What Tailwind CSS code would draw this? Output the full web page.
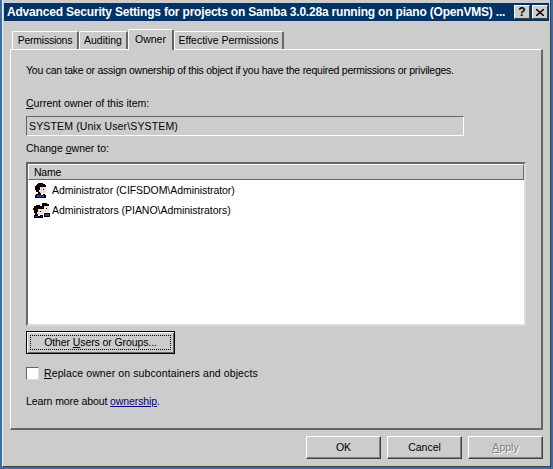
<!DOCTYPE html>
<html lang="en">
<head>
    <meta charset="UTF-8">
    <title>Advanced Security Settings</title>
    <script src="https://cdn.jsdelivr.net/npm/@tailwindcss/browser@4"></script>
</head>
<body class="bg-[#3a6ea5]">
    <!-- window -->
    <div class="ml-[2px] w-[549px] h-[467px] overflow-hidden bg-[#cccccc] border-l border-l-[#eeeeee] border-r border-r-[#404040] border-b border-b-[#404040] font-['Liberation_Sans',sans-serif] text-[10.5px] tracking-[-0.25px] leading-[13px] text-black flex flex-col">
        <!-- title bar -->
        <div class="h-[18px] mt-[3px] ml-[1px] mr-[1px] bg-[#003366] flex items-center pl-[3px] pr-[1px] shrink-0">
            <span class="flex-1 min-w-0 text-white font-bold text-[12px] tracking-[-0.19px] whitespace-nowrap">Advanced Security Settings for projects on Samba 3.0.28a running on piano (OpenVMS) ...</span>
            <div class="w-[16px] h-[14px] bg-[#cccccc] border border-t-white border-l-white border-r-[#404040] border-b-[#404040] flex items-center justify-center font-bold text-[12px] tracking-normal">?</div>
            <div class="w-[16px] h-[14px] bg-[#cccccc] border border-t-white border-l-white border-r-[#404040] border-b-[#404040] ml-[2px] flex items-center justify-center">
                <svg width="8" height="7" viewBox="0 0 8 7"><path d="M0 0L8 7M8 0L0 7" stroke="#000" stroke-width="1.4"/></svg>
            </div>
        </div>

        <!-- tabs -->
        <div class="flex items-end h-[28px] pl-[9px] shrink-0">
            <div class="w-[67px] h-[18px] bg-[#cccccc] border-t border-l border-white border-r-2 border-r-[#666666] rounded-t-[2px] flex items-center justify-center">Permissions</div>
            <div class="w-[49px] h-[18px] bg-[#cccccc] border-t border-l border-white border-r-2 border-r-[#666666] rounded-t-[2px] flex items-center justify-center tracking-[0px]">Auditing</div>
            <div class="w-[46px] h-[21px] -mb-[1px] z-10 bg-[#cccccc] border-t border-l border-white border-r-2 border-r-[#666666] rounded-t-[2px] flex items-center justify-center pb-[2px] tracking-[0px]">Owner</div>
            <div class="w-[110px] h-[18px] bg-[#cccccc] border-t border-l border-white border-r-2 border-r-[#666666] rounded-t-[2px] flex items-center justify-center tracking-[0px]">Effective Permissions</div>
        </div>

        <!-- panel -->
        <div class="ml-[7px] w-[533px] h-[381px] border-t border-l border-white border-r-2 border-b-2 border-r-[#666666] border-b-[#666666] pl-[15px] shrink-0 flex flex-col">
            <p class="mt-[14px]">You can take or assign ownership of this object if you have the required permissions or privileges.</p>
            <p class="mt-[20px] tracking-[0px]"><u>C</u>urrent owner of this item:</p>
            <div class="mt-[6px] h-[20px] w-[438px] border border-t-[#666666] border-l-[#666666] border-r-white border-b-white flex items-center pl-[2px] tracking-[0.15px]">SYSTEM (Unix User\SYSTEM)</div>
            <p class="mt-[6px] tracking-[0px]">Change <u>o</u>wner to:</p>
            <!-- list -->
            <div class="mt-[7px] h-[164px] w-[500px] bg-white border-2 border-t-[#666666] border-l-[#666666] border-r-[#dddddd] border-b-[#dddddd] flex flex-col">
                <div class="h-[16px] bg-[#cccccc] border-t border-l border-white border-r border-b border-r-[#666666] border-b-[#666666] pl-[5px] flex items-center shrink-0">Name</div>
                <div class="h-[20px] flex items-center pl-[6px]">
                    <svg class="w-[14px] h-[15px] mr-[4px] shrink-0" viewBox="0 0 14 15" shape-rendering="crispEdges">
                        <path d="M4 0H9V1H11V2H12V4H6V7H5V9H6V10H7V11H4V9H2V7H1V3H2V2H3V1H4Z" fill="#000"/>
                        <path d="M6 4H12V7H13V8H12V10H8V11H7V10H6V9H5V7H6Z" fill="#f6dcd2"/>
                        <path d="M9 6H10V7H9Z" fill="#000"/>
                        <path d="M2 11H7V12H9V11H11V12H12V15H1V12H2Z" fill="#000"/>
                        <path d="M3 12H7V13H9V12H10V14H3Z" fill="#1c3fb0"/>
                    </svg>
                    <span class="tracking-[-0.06px]">Administrator (CIFSDOM\Administrator)</span>
                </div>
                <div class="h-[20px] flex items-center pl-[5px]">
                    <svg class="w-[18px] h-[15px] mr-[1px] shrink-0" viewBox="0 0 18 15" shape-rendering="crispEdges">
                        <!-- back head -->
                        <path d="M9 0H14V1H16V3H11V6H10V8H8V3H9Z" fill="#000"/>
                        <path d="M11 3H16V6H17V7H16V9H12V8H11V7H10V6H11Z" fill="#f6dcd2"/>
                        <path d="M13 5H14V6H13Z" fill="#000"/>
                        <!-- front head -->
                        <path d="M3 2H7V3H9V4H10V6H5V9H4V11H5V12H2V10H1V7H0V5H1V3H3Z" fill="#000"/>
                        <path d="M5 6H10V8H11V9H10V11H7V12H5V11H4V9H5Z" fill="#f6dcd2"/>
                        <path d="M7 8H8V9H7Z" fill="#000"/>
                        <!-- shoulders -->
                        <path d="M11 10H17V14H11ZM1 12H5V13H7V12H10V15H1Z" fill="#000"/>
                        <path d="M12 11H16V13H12ZM2 13H5V14H9V13H8V14H2Z" fill="#1c3fb0"/>
                    </svg>
                    <span class="tracking-[-0.03px]">Administrators (PIANO\Administrators)</span>
                </div>
            </div>
            <!-- other users button -->
            <button class="mt-[5px] w-[149px] h-[23px] bg-[#cccccc] border border-black shadow-[inset_1px_1px_0_#ffffff,inset_-1px_-1px_0_#666666] flex items-center justify-center">
                <span class="w-[141px] h-[15px] border border-dotted border-black flex items-center justify-center"><span class="tracking-[-0.1px]">Other <u>U</u>sers or Groups...</span></span>
            </button>
            <label class="mt-[13px] flex items-center">
                <span class="w-[13px] h-[13px] bg-white border border-t-[#666666] border-l-[#666666] border-r-[#dddddd] border-b-[#dddddd] mr-[5px]"></span>
                <span class="tracking-[0.1px]"><u>R</u>eplace owner on subcontainers and objects</span>
            </label>
            <p class="mt-[15px] tracking-[-0.1px]">Learn more about <a href="#" class="text-[#000080] underline">ownership</a>.</p>
        </div>

        <!-- footer buttons -->
        <div class="flex gap-[6px] mt-[6px] ml-[303px]">
            <button class="w-[75px] h-[23px] bg-[#cccccc] border border-t-white border-l-white border-r-[#404040] border-b-[#404040] shadow-[inset_-1px_-1px_0_#808080] tracking-[0px]">OK</button>
            <button class="w-[75px] h-[23px] bg-[#cccccc] border border-t-white border-l-white border-r-[#404040] border-b-[#404040] shadow-[inset_-1px_-1px_0_#808080] tracking-[0px]">Cancel</button>
            <button class="w-[75px] h-[23px] bg-[#cccccc] border border-t-white border-l-white border-r-[#404040] border-b-[#404040] shadow-[inset_-1px_-1px_0_#808080] text-[#808080] [text-shadow:1px_1px_0_#ffffff] tracking-[0px]"><u>A</u>pply</button>
        </div>
    </div>
</body>
</html>
